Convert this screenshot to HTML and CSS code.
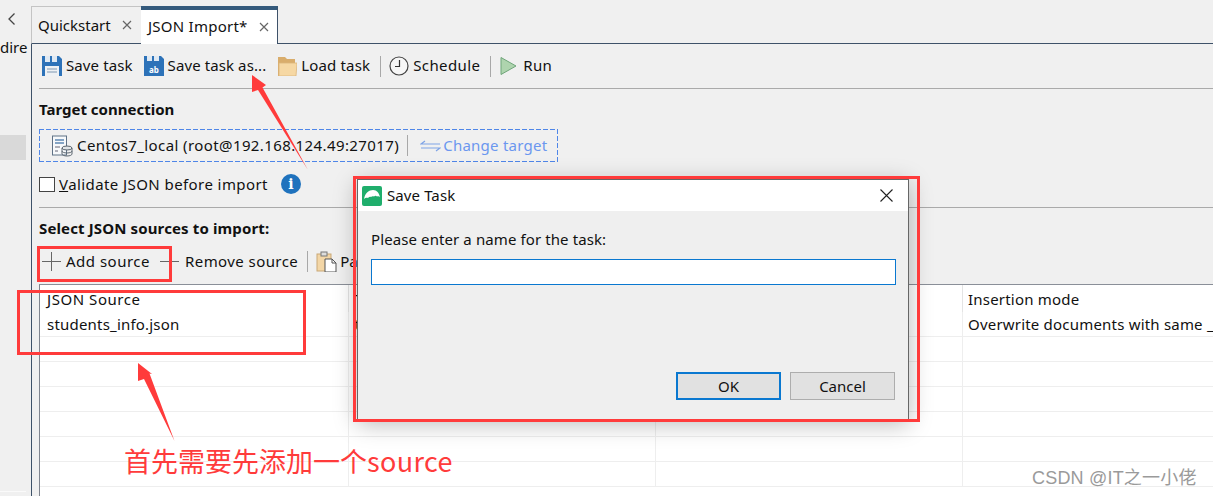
FILE: index.html
```html
<!DOCTYPE html>
<html lang="en">
<head>
<meta charset="utf-8">
<title>JSON Import</title>
<link rel="stylesheet" href="styles.css">
</head>
<body>
<div class="app">
  <aside class="sidebar">
    <svg class="chevron" width="10" height="14" viewBox="0 0 10 14"><path d="M7.5 1.500 2 7l5.500 5.500" fill="none" stroke="#444" stroke-width="1.300"/></svg>
    <div class="side-text">dire</div>
    <div class="side-sel"></div>
    <div class="side-line"></div>
  </aside>
  <main class="main">
    <nav class="tabs">
      <div class="tab tab-q"><span>Quickstart</span><svg class="tab-x" width="10" height="10" viewBox="0 0 10 10"><path d="M1 1l8 8M9 1l-8 8" stroke="#666" stroke-width="1.200"/></svg></div>
      <div class="tab tab-j"><span>JSON Import*</span><svg class="tab-x" width="10" height="10" viewBox="0 0 10 10"><path d="M1 1l8 8M9 1l-8 8" stroke="#666" stroke-width="1.200"/></svg></div>
    </nav>
    <section class="panel">
      <div class="toolbar">
        <div class="tool t-save">
          <svg width="20" height="20" viewBox="0 0 20 20"><path d="M0 0h17l3 3v17H0z" fill="#2d72b8"/><path d="M3 0h5v6H3zM10 0h5v6h-5z" fill="#dfe9f3"/><rect x="3" y="10" width="14" height="10" fill="#eef1f4"/><path d="M5 13h10M5 16h10" stroke="#7f98b2"/></svg>
          <span>Save task</span>
        </div>
        <div class="tool t-saveas">
          <svg width="20" height="20" viewBox="0 0 20 20"><path d="M0 0h17l3 3v17H0z" fill="#2d72b8"/><path d="M3 0h5v5H3zM10 0h5v5h-5z" fill="#dfe9f3"/><text class="ab" x="10" y="16.500" text-anchor="middle">ab</text></svg>
          <span>Save task as...</span>
        </div>
        <div class="tool t-load">
          <svg width="20" height="20" viewBox="0 0 20 20"><path d="M1 1h7l2 2h8v17H1z" fill="#d9ad6c"/><path d="M2 7h18l-1 13H2z" fill="#f6d8a4" stroke="#dcb67c" stroke-width=".800"/></svg>
          <span>Load task</span>
        </div>
        <i class="sep sep-a"></i>
        <div class="tool t-sched">
          <svg width="20" height="20" viewBox="0 0 20 20"><circle cx="10" cy="10" r="9" fill="#f7f7f7" stroke="#444" stroke-width="1.200"/><path d="M10.500 4v6.500H6" fill="none" stroke="#333" stroke-width="1.200"/></svg>
          <span>Schedule</span>
        </div>
        <i class="sep sep-b"></i>
        <div class="tool t-run">
          <svg width="17" height="20" viewBox="0 0 17 20"><path d="M1 1.500 16 10 1 18.500z" fill="#aed4ae" stroke="#6fa57a"/></svg>
          <span>Run</span>
        </div>
      </div>
      <h2 class="heading">Target connection</h2>
      <div class="target">
        <svg class="db" width="22" height="22" viewBox="0 0 22 22"><rect x="1.500" y="1" width="14" height="19" fill="#f7f9fb" stroke="#5f7286"/><path d="M4 5h9M4 8h9" stroke="#5f88b4" stroke-width="1.500"/><path d="M4 12h5M4 16h3" stroke="#667"/><ellipse cx="16" cy="13" rx="5" ry="2" fill="#dfe3e6" stroke="#5d6770"/><path d="M11 13v6c0 1 2 2 5 2s5-1 5-2v-6M11 16c0 1 2 2 5 2s5-1 5-2" fill="none" stroke="#5d6770"/></svg>
        <span class="conn">Centos7_local (root@192.168.124.49:27017)</span>
        <i class="sep sep-t"></i>
        <svg class="swap" width="21" height="12" viewBox="0 0 21 12"><path d="M5 1 1 4h19M16 11l4-3H1" fill="none" stroke="#7ea3e6" stroke-width="1.200"/></svg>
        <span class="change">Change target</span>
      </div>
      <div class="check-row">
        <span class="box"></span>
        <span class="check-label"><u>V</u>alidate JSON before import</span>
        <svg class="info" width="20" height="20" viewBox="0 0 20 20"><circle cx="10" cy="10" r="10" fill="#1f72bd"/><text class="info-i" x="10" y="15" text-anchor="middle">i</text></svg>
      </div>
      <h2 class="heading heading-s">Select JSON sources to import:</h2>
      <div class="toolbar2">
        <div class="tool t-add">
          <svg width="19" height="19" viewBox="0 0 19 19"><path d="M9.500 0v19M0 9.500h19" stroke="#666"/></svg>
          <span>Add source</span>
        </div>
        <div class="tool t-rem">
          <svg width="19" height="19" viewBox="0 0 19 19"><path d="M0 9.500h19" stroke="#666"/></svg>
          <span>Remove source</span>
        </div>
        <i class="sep sep-s"></i>
        <div class="tool t-paste">
          <svg width="21" height="21" viewBox="0 0 21 21"><rect x="1" y="3" width="14" height="17" fill="#f3d6a6" stroke="#c9a877"/><rect x="5" y="1" width="6" height="4" fill="#ddd" stroke="#777"/><path d="M9 8h7l4 4v9H9z" fill="#fff" stroke="#555"/><path d="M16 8v4h4" fill="none" stroke="#555"/></svg>
          <span>Paste</span>
        </div>
      </div>
      <div class="grid">
        <div class="row row-head"><div class="cell cell-src">JSON Source</div><div class="cell cell-b">Target collection</div><div class="cell">Options</div><div class="cell cell-last">Insertion mode</div></div>
        <div class="row"><div class="cell">students_info.json</div><div class="cell cell-b">target</div><div class="cell"></div><div class="cell cell-last">Overwrite documents with same _id</div></div>
        <div class="row"><div class="cell"></div><div class="cell"></div><div class="cell"></div><div class="cell cell-last"></div></div>
        <div class="row"><div class="cell"></div><div class="cell"></div><div class="cell"></div><div class="cell cell-last"></div></div>
        <div class="row"><div class="cell"></div><div class="cell"></div><div class="cell"></div><div class="cell cell-last"></div></div>
        <div class="row"><div class="cell"></div><div class="cell"></div><div class="cell"></div><div class="cell cell-last"></div></div>
        <div class="row"><div class="cell"></div><div class="cell"></div><div class="cell"></div><div class="cell cell-last"></div></div>
        <div class="row"><div class="cell"></div><div class="cell"></div><div class="cell"></div><div class="cell cell-last"></div></div>
      </div>
    </section>
  </main>
</div>

<div class="dialog">
  <header class="dlg-title">
    <svg width="20" height="20" viewBox="0 0 20 20"><rect width="20" height="20" rx="2" fill="#1fae6c"/><path d="M2 13C3 7 7 4 11 4s6 3 7 7c-1-1-2-1-3-.500-1-1-2-1-3 0-1-.500-2-.500-3 .500-1-.500-2 0-3 1-1-.500-3 0-4 1z" fill="#fff"/></svg>
    <span class="dlg-name">Save Task</span>
    <svg class="dlg-close" width="13" height="13" viewBox="0 0 13 13"><path d="M.500.500l12 12M12.500.500l-12 12" stroke="#222" stroke-width="1.100"/></svg>
  </header>
  <div class="dlg-body">
    <label class="dlg-label">Please enter a name for the task:</label>
    <div class="dlg-input"></div>
    <div class="dlg-actions">
      <div class="btn btn-ok">OK</div>
      <div class="btn">Cancel</div>
    </div>
  </div>
</div>

<div class="mark mark-add"></div>
<div class="mark mark-src"></div>
<div class="mark mark-dlg"></div>
<svg class="arrows" width="1213" height="496" viewBox="0 0 1213 496">
  <path d="M252 75 266 85 262.500 87.500 308 170 258 90 252 92z" fill="#ff3b3b"/>
  <path d="M138 363 152 374 149.500 373.500 174.500 441 144 379 138 381z" fill="#ff3b3b"/>
</svg>
<div class="note">首先需要先添加一个<span class="note-en">source</span></div>
<div class="watermark">CSDN @IT之一小佬</div>
</body>
</html>
```
FILE: styles.css
```css
* { box-sizing: border-box; }
html, body { margin: 0; height: 496px; overflow: hidden; }
body {
  position: relative;
  background: #f0f0f0;
  color: #111;
  font: 15px/20px "Noto Sans", "Noto Sans CJK SC", sans-serif;
}
.app { display: flex; height: 496px; }
.sidebar { width: 31px; flex: none; display: flex; flex-direction: column; overflow: hidden; }
.chevron { margin: 12px 0 0 7px; flex: none; }
.side-text { margin-top: 11px; height: 20px; white-space: nowrap; }
.side-sel { margin-top: 78px; width: 26px; height: 25px; background: #d9d9d9; }
.side-line { margin-top: 331px; width: 26px; height: 1px; background: #fafafa; }

.main { flex: 1; min-width: 0; padding-top: 6px; display: flex; flex-direction: column; }
.tabs { display: flex; height: 38px; flex: none; margin-bottom: -1px; position: relative; z-index: 1; }
.tab { display: flex; align-items: center; height: 38px; white-space: nowrap; }
.tab span { margin-top: -1px; }
.tab-q {
  width: 110px; padding-left: 6px;
  border-top: 1px solid #c4c4c4; border-left: 1px solid #c4c4c4;
  border-bottom: 1px solid #3e5269;
}
.tab-j {
  width: 137px; padding-left: 7px; background: #fff;
  border-top: 4px solid #345a7c; border-right: 1px solid #3e5269;
}
.tab-j span { margin-top: -3px; letter-spacing: .25px; }
.tab-x { margin-left: 11px; flex: none; }

.panel {
  flex: 1; min-height: 0; padding-left: 7px;
  border-left: 1px solid #3e5269; border-top: 1px solid #3e5269;
  overflow: hidden;
}
.toolbar {
  display: flex; align-items: center; height: 45px;
  padding-left: 3px;
  border-bottom: 1px solid #aaa;
}
.tool { display: flex; align-items: center; gap: 4px; white-space: nowrap; flex: none; }
.tool span { margin-top: -2px; }
.sep { display: block; flex: none; width: 1px; height: 21px; background: #a8a8a8; }
.t-save span { letter-spacing: .1px; }
.t-saveas { margin-left: 11px; }
.t-saveas span { letter-spacing: .1px; }
.t-load { margin-left: 11px; }
.t-load span { letter-spacing: .15px; }
.sep-a { margin-left: 10px; }
.t-sched { margin-left: 8px; }
.t-sched span { letter-spacing: .4px; }
.sep-b { margin-left: 10px; }
.t-run { margin-left: 9px; gap: 6px; }
.t-run span { letter-spacing: .3px; }
.ab { font: 700 8px "Noto Sans", sans-serif; fill: #fff; }

.heading { margin: 0; height: 40px; display: flex; align-items: center; font-size: 15px; font-weight: 700; }
.heading-s { letter-spacing: .13px; }

.target {
  display: inline-flex; align-items: center; height: 33px; width: 519px;
  padding-left: 12px; vertical-align: top;
  background:
    repeating-linear-gradient(90deg, #4f86e8 0 5px, transparent 5px 7px) top / 100% 1px no-repeat,
    repeating-linear-gradient(90deg, #4f86e8 0 5px, transparent 5px 7px) bottom / 100% 1px no-repeat,
    repeating-linear-gradient(0deg, #4f86e8 0 5px, transparent 5px 7px) left / 1px 100% no-repeat,
    repeating-linear-gradient(0deg, #4f86e8 0 5px, transparent 5px 7px) right / 1px 100% no-repeat;
}
.db { flex: none; margin-right: 4px; }
.conn { white-space: nowrap; letter-spacing: .4px; margin-top: -2px; }
.sep-t { margin-left: 8px; height: 21px; }
.swap { margin-left: 12px; flex: none; }
.change { margin-left: 2px; color: #6b97ef; white-space: nowrap; letter-spacing: .25px; margin-top: -2px; }

.check-row {
  display: flex; align-items: center; height: 46px;
  border-bottom: 1px solid #aaa; padding-bottom: 1px;
}
.box { width: 16px; height: 15px; border: 1px solid #444; background: #fff; flex: none; }
.check-label { margin-left: 4px; white-space: nowrap; letter-spacing: .42px; }
.info { margin-left: 13px; flex: none; }
.info-i { font: 700 14px "DejaVu Serif", serif; fill: #fff; }

.toolbar2 { display: flex; align-items: center; height: 36px; padding: 0 0 10px 3px; }
.t-add { gap: 5px; }
.t-add span { letter-spacing: .5px; margin-top: 0; }
.t-rem { margin-left: 10px; gap: 6px; }
.t-rem span { letter-spacing: .42px; margin-top: 0; }
.sep-s { margin-left: 9px; }
.t-paste { margin-left: 8px; gap: 3px; }
.t-paste span { margin-top: 0; }

.grid { height: 212px; overflow: hidden; background: #fff; border-top: 1px solid #8a8f98; border-left: 1px solid #80858f; }
.row { display: grid; grid-template-columns: 309px 307px 307px 1fr; height: 25px; }
.cell { padding: 0 0 0 7px; line-height: 24px; white-space: nowrap; overflow: hidden; border-right: 1px solid #eee; border-bottom: 1px solid #eee; letter-spacing: .2px; }
.cell-b { padding-left: 6px; }
.cell-last { border-right: 0; padding-left: 5px; }
.row-head { height: 27px; }
.row-head .cell { border-bottom: 0; line-height: 28px; border-right-color: #e4e4e4; }
.row-head .cell-src { letter-spacing: .55px; }

.dialog {
  position: absolute; left: 357px; top: 179px; width: 552px; height: 241px;
  background: #efefef; border: 1px solid #666; box-shadow: 0 4px 22px rgba(0,0,0,.28);
  display: flex; flex-direction: column;
}
.dlg-title { flex: none; height: 31px; background: #fff; display: flex; align-items: center; padding: 0 15px 0 4px; }
.dlg-name { margin-left: 5px; margin-top: -2px; letter-spacing: .1px; }
.dlg-close { margin-left: auto; flex: none; }
.dlg-body { flex: 1; padding: 18px 13px 19px 13px; display: flex; flex-direction: column; }
.dlg-label { height: 20px; letter-spacing: .1px; }
.dlg-input { margin-top: 10px; width: 525px; height: 26px; background: #fff; border: 1px solid #0a78d0; }
.dlg-actions { margin-top: auto; display: flex; justify-content: flex-end; gap: 9px; }
.btn { width: 105px; height: 28px; display: flex; align-items: center; justify-content: center; background: #e1e1e1; border: 1px solid #adadad; }
.btn-ok { border: 2px solid #0a78d0; }

.mark { position: absolute; border: 3px solid #ff3b3b; }
.mark-add { left: 37px; top: 246px; width: 135px; height: 36px; }
.mark-src { left: 17px; top: 290px; width: 289px; height: 65px; }
.mark-dlg { left: 353px; top: 176px; width: 567px; height: 246px; }
.arrows { position: absolute; left: 0; top: 0; pointer-events: none; }
.note { position: absolute; left: 124px; top: 441px; font: 27px/40px "Noto Sans CJK SC", sans-serif; color: #ff3b3b; white-space: nowrap; }
.note-en { letter-spacing: .35px; }
.watermark { position: absolute; left: 1032px; top: 467px; font: 18px/22px "Liberation Sans", "Noto Sans CJK SC", sans-serif; letter-spacing: .2px; color: #9a9a9a; white-space: nowrap; }
```
